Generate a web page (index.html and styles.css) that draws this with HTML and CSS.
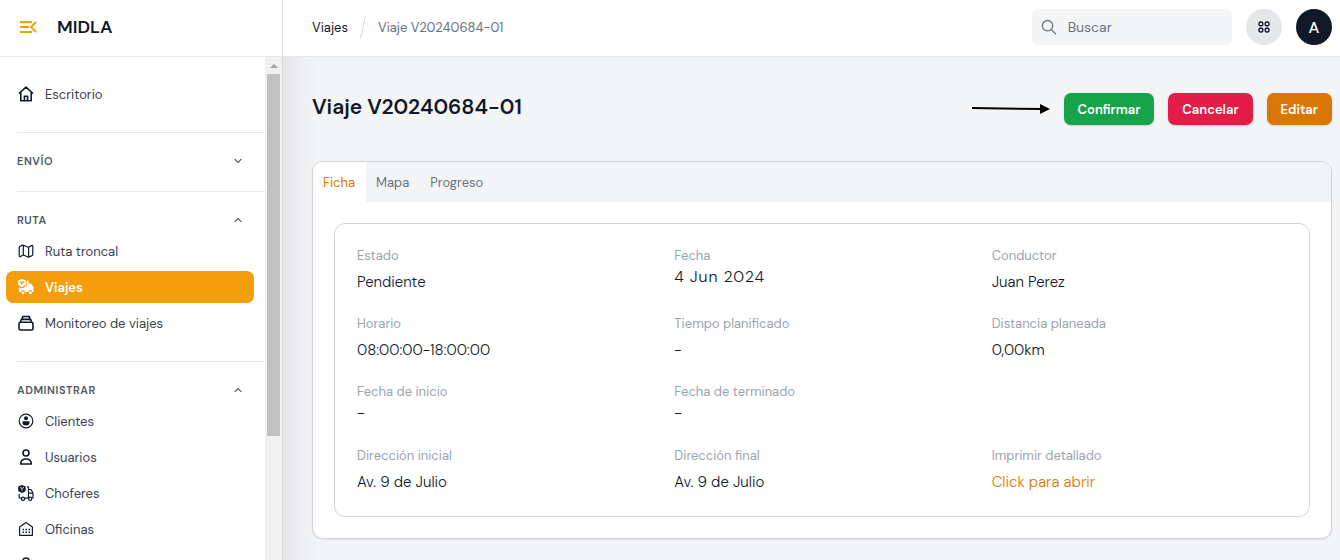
FILE: index.html
```html
<!DOCTYPE html>
<html lang="es">
<head>
    <meta charset="UTF-8">
    <title>Viaje V20240684-01 - MIDLA</title>
    <link rel="stylesheet" href="styles.css">
</head>
<body>
    <header class="topbar">
        <div class="brand">
            <button class="menu-toggle" aria-label="Menú">
                <svg width="18" height="14" viewBox="0 0 18 14" fill="none" stroke="currentColor" stroke-width="2"><path d="M1 2h12M1 7h9M1 12h12M17 2l-5 5 5 5"/></svg>
            </button>
            <span class="brand-name">MIDLA</span>
        </div>
        <nav class="breadcrumbs">
            <a href="#">Viajes</a>
            <svg width="6" height="22" viewBox="0 0 6 22" stroke="#d1d5db"><path d="M5.500 0L.5 22"/></svg>
            <span>Viaje V20240684-01</span>
        </nav>
        <div class="topbar-right">
            <label class="search">
                <svg width="18" height="18" viewBox="0 0 24 24" fill="none" stroke="currentColor" stroke-width="2" stroke-linecap="round"><circle cx="10" cy="10" r="8"/><path d="M16 16l6.500 6.500"/></svg>
                <input type="search" placeholder="Buscar" aria-label="Buscar">
            </label>
            <button class="round apps" aria-label="Accesos">
                <svg width="12" height="12" viewBox="0 0 12 12" fill="none" stroke="currentColor" stroke-width="1.400"><rect x="1" y="1" width="3.800" height="3.800" rx="1.400"/><rect x="7.200" y="1" width="3.800" height="3.800" rx="1.400"/><rect x="1" y="7.200" width="3.800" height="3.800" rx="1.400"/><rect x="7.200" y="7.200" width="3.800" height="3.800" rx="1.400"/></svg>
            </button>
            <button class="round avatar">A</button>
        </div>
    </header>

    <div class="layout">
        <aside class="sidebar">
            <nav class="menu">
                <a class="item item-home" href="#">
                    <svg class="icon" viewBox="0 0 16 16"><path d="M1 7.500L8 1.200l7 6.300M2.800 6.200v8.600h10.400V6.200M6.400 14.500V10.300h3.200v4.200"/></svg>
                    Escritorio
                </a>
                <section class="group">
                    <button class="group-title">ENVÍO <svg class="chevron" viewBox="0 0 8 6"><path d="M.7 1.200L4 4.500l3.300-3.300"/></svg></button>
                </section>
                <section class="group">
                    <button class="group-title">RUTA <svg class="chevron" viewBox="0 0 8 6"><path d="M.7 4.800L4 1.500l3.300 3.300"/></svg></button>
                    <div class="group-items">
                        <a class="item" href="#">
                            <svg class="icon thin" viewBox="0 0 16 16"><path d="M1.200 4.600q0-.8.8-1.200l2.800-1.400 5.600 2.200 3-1.600q1.400-.6 1.400.8v8q0 .8-.8 1.200l-3.400 1.600-5.200-2.200-2.800 1.400q-1.400.5-1.400-.8zM5.300 2v10M10.600 4.200v10"/></svg>
                            Ruta troncal
                        </a>
                        <a class="item active" href="#">
                            <svg class="icon solid" viewBox="0 0 16 16"><path d="M4 0l3.700 1.600v4.500L4 8 .2 6.100V1.600z"/><path d="M8.700 1.500h1.800v3H13l2.500 3.600V13h-1.300a1.900 1.900 0 0 0-3.800 0H6.900A1.900 1.900 0 0 0 3.100 13H1V8.200l3 1.200 4.700-2.300z"/><circle cx="5" cy="13.800" r="1.500"/><circle cx="12.300" cy="13.800" r="1.500"/><path class="cut" d="M2 2.600l2 1 2-1M4 3.600v2.200"/></svg>
                            Viajes
                        </a>
                        <a class="item" href="#">
                            <svg class="icon" viewBox="0 0 16 16"><rect x="1" y="7.200" width="14" height="7.800" rx="1.600"/><path d="M2.500 7l.8-2.600h9.400l.8 2.600M4.200 4.200l.6-2.700h6.400l.6 2.700"/></svg>
                            Monitoreo de viajes
                        </a>
                    </div>
                </section>
                <section class="group">
                    <button class="group-title">ADMINISTRAR <svg class="chevron" viewBox="0 0 8 6"><path d="M.7 4.800L4 1.500l3.300 3.300"/></svg></button>
                    <div class="group-items">
                        <a class="item" href="#">
                            <svg class="icon thin" viewBox="0 0 16 16"><circle cx="8" cy="8" r="6.800"/><g class="fill"><circle cx="8" cy="5.300" r="2"/><path d="M4.500 8.200h7v1.500a3.500 2.700 0 0 1-7 0z"/></g></svg>
                            Clientes
                        </a>
                        <a class="item" href="#">
                            <svg class="icon" viewBox="0 0 16 16"><circle cx="8" cy="4" r="3"/><path d="M2.700 15c0-3.200 2-5 5.300-5s5.300 1.800 5.300 5z"/></svg>
                            Usuarios
                        </a>
                        <a class="item" href="#">
                            <svg class="icon thin" viewBox="0 0 16 16"><path class="fill" d="M4 0l3.700 1.600v4.500L4 8 .2 6.100V1.600z"/><path stroke="#fff" stroke-width=".8" d="M2 2.400l2 1 2-1M4 3.400v2.400"/><path d="M1.200 9v4h2M6.900 13.200h3.600M9 1.800h1.500v11M10.800 4.500h2.200l2 3.500v5h-1M11 8.200h4"/><circle cx="5" cy="13.700" r="1.600"/><circle cx="12.200" cy="13.700" r="1.600"/></svg>
                            Choferes
                        </a>
                        <a class="item" href="#">
                            <svg class="icon thin" viewBox="0 0 16 16"><path d="M1.600 14.300V6L8 1.400 14.400 6v8.300z"/><path d="M4.500 8.500h7.500M4.500 11.200h7.500" stroke-width="1.500" stroke-dasharray="1.500 1.500"/></svg>
                            Oficinas
                        </a>
                        <a class="item" href="#">
                            <svg class="icon" viewBox="0 0 16 16"><circle cx="8" cy="4" r="3"/><path d="M2.700 15c0-3.200 2-5 5.300-5s5.300 1.800 5.300 5z"/></svg>
                        </a>
                    </div>
                </section>
            </nav>
            <div class="scrollbar">
                <div class="scroll-up"></div>
                <div class="scroll-thumb"></div>
            </div>
        </aside>

        <main class="content">
            <div class="page-head">
                <h1>Viaje V20240684-01</h1>
                <div class="actions">
                    <svg class="arrow" width="78" height="12" viewBox="0 0 78 12"><path d="M0 5l70 1" stroke="#000" stroke-width="2"/><path d="M68 1l10 5-10 5z"/></svg>
                    <button class="btn btn-green">Confirmar</button>
                    <button class="btn btn-red">Cancelar</button>
                    <button class="btn btn-amber">Editar</button>
                </div>
            </div>

            <div class="card">
                <div class="tabs" role="tablist">
                    <button class="tab selected" role="tab">Ficha</button>
                    <button class="tab" role="tab">Mapa</button>
                    <button class="tab" role="tab">Progreso</button>
                </div>
                <div class="panel">
                    <dl class="details">
                        <div>
                            <dt>Estado</dt>
                            <dd>Pendiente</dd>
                        </div>
                        <div>
                            <dt>Fecha</dt>
                            <dd class="date">4 Jun 2024</dd>
                        </div>
                        <div>
                            <dt>Conductor</dt>
                            <dd>Juan Perez</dd>
                        </div>
                        <div>
                            <dt>Horario</dt>
                            <dd>08:00:00-18:00:00</dd>
                        </div>
                        <div>
                            <dt>Tiempo planificado</dt>
                            <dd>-</dd>
                        </div>
                        <div>
                            <dt>Distancia planeada</dt>
                            <dd>0,00km</dd>
                        </div>
                        <div>
                            <dt>Fecha de inicio</dt>
                            <dd class="date">-</dd>
                        </div>
                        <div class="span-2">
                            <dt>Fecha de terminado</dt>
                            <dd class="date">-</dd>
                        </div>
                        <div>
                            <dt>Dirección inicial</dt>
                            <dd>Av. 9 de Julio</dd>
                        </div>
                        <div>
                            <dt>Dirección final</dt>
                            <dd>Av. 9 de Julio</dd>
                        </div>
                        <div>
                            <dt>Imprimir detallado</dt>
                            <dd><a href="#">Click para abrir</a></dd>
                        </div>
                    </dl>
                </div>
            </div>
        </main>
    </div>
</body>
</html>
```
FILE: styles.css
```css
* {
    box-sizing: border-box;
}

body {
    margin: 0;
    height: 100vh;
    display: flex;
    flex-direction: column;
    overflow: hidden;
    font-family: "DM Sans", Inter, "Liberation Sans", sans-serif;
    font-size: 13px;
    color: #111827;
    background: #f3f4f6;
}

a {
    color: inherit;
    text-decoration: none;
}

button {
    font: inherit;
    color: inherit;
    border: 0;
    padding: 0;
    background: none;
    cursor: pointer;
}

/* Top bar */
.topbar {
    display: flex;
    align-items: center;
    flex: none;
    height: 57px;
    padding-right: 8px;
    background: #fff;
    border-bottom: 1px solid #e5e7eb;
    position: relative;
    z-index: 2;
}

.brand,
.breadcrumbs,
.topbar-right {
    padding-bottom: 2px;
}

.brand {
    display: flex;
    align-items: center;
    gap: 20px;
    width: 283px;
    height: 100%;
    padding-left: 19px;
    border-right: 1px solid #e5e7eb;
}

.menu-toggle {
    display: flex;
    color: #f59e0b;
}

.brand-name {
    font-size: 18px;
    font-weight: 600;
}

.breadcrumbs {
    display: flex;
    align-items: center;
    gap: 12px;
    padding-left: 29px;
}

.breadcrumbs span {
    color: #6b7280;
}

.topbar-right {
    display: flex;
    gap: 14px;
    margin-left: auto;
}

.search {
    display: flex;
    align-items: center;
    gap: 9px;
    width: 200px;
    height: 36px;
    padding-left: 9px;
    border-radius: 7px;
    background: #f4f5f7;
    color: #6b7280;
}

.search input {
    width: 100%;
    border: 0;
    outline: 0;
    background: none;
    font: inherit;
    font-size: 14px;
}

.search input::placeholder {
    color: #6b7280;
}

.round {
    display: flex;
    align-items: center;
    justify-content: center;
    width: 36px;
    height: 36px;
    border-radius: 50%;
}

.apps {
    background: #e5e7eb;
}

.avatar {
    background: #111827;
    color: #fff;
    font-size: 16px;
    font-weight: 500;
}

/* Sidebar */
.layout {
    display: flex;
    flex: 1;
    min-height: 0;
}

.sidebar {
    display: flex;
    width: 283px;
    flex: none;
    background: #fff;
    border-right: 1px solid #e5e7eb;
    position: relative;
    z-index: 1;
}

/* soft shade over the content edge */
.sidebar::after {
    content: "";
    position: absolute;
    top: 0;
    bottom: 0;
    left: 100%;
    width: 38px;
    background: linear-gradient(to right, rgba(0, 0, 0, 0.07), rgba(0, 0, 0, 0.02) 50%, transparent);
    pointer-events: none;
}

.menu {
    flex: 1;
    overflow: hidden;
    padding-top: 21px;
}

.item {
    display: flex;
    align-items: center;
    gap: 11px;
    height: 32px;
    margin: 0 11px 0 6px;
    padding-left: 12px;
    border-radius: 7px;
    color: #374151;
}

.item-home {
    margin-bottom: 22px;
}

.item.active {
    background: #f59e0b;
    color: #fff;
    font-weight: 600;
}

.icon {
    width: 16px;
    height: 16px;
    fill: none;
    stroke: #111827;
    stroke-width: 1.6;
    stroke-linejoin: round;
}

.icon.thin {
    stroke-width: 1.2;
}

.icon .fill {
    fill: #111827;
    stroke: none;
}

.icon.solid {
    fill: #fff;
    stroke: none;
}

.icon .cut {
    fill: none;
    stroke: #f59e0b;
}

.group {
    margin-left: 17px;
    padding: 18px 0 20px;
    border-top: 1px solid #e5e7eb;
}

.group-title {
    display: flex;
    align-items: center;
    justify-content: space-between;
    width: 100%;
    height: 20px;
    padding-right: 23px;
    font-size: 11px;
    font-weight: 600;
    letter-spacing: 0.05em;
    color: #4b5563;
}

.chevron {
    width: 8px;
    height: 6px;
    fill: none;
    stroke: #4b5563;
    stroke-width: 1.2;
}

.group-items {
    display: grid;
    gap: 4px;
    margin-left: -17px;
    padding: 5px 0 2px;
}

.scrollbar {
    display: flex;
    flex-direction: column;
    align-items: center;
    width: 17px;
    background: #f1f1f1;
}

.scroll-up {
    margin: 7px 0 6px;
    border: 4px solid transparent;
    border-top: 0;
    border-bottom-color: #a3a3a3;
}

.scroll-thumb {
    width: 13px;
    height: 72%;
    background: #c1c1c1;
}

/* Content */
.content {
    flex: 1;
    min-width: 0;
    padding: 36px 8px 20px 29px;
}

.page-head {
    display: flex;
    align-items: flex-start;
    justify-content: space-between;
    margin-bottom: 36px;
}

h1 {
    margin: 0;
    font-size: 21px;
    line-height: 28px;
    font-weight: 600;
}

.actions {
    display: flex;
    align-items: center;
    gap: 14px;
}

.btn {
    height: 32px;
    padding: 0 14px;
    border-radius: 7px;
    color: #fff;
    font-weight: 600;
    box-shadow: 0 1px 2px rgba(0, 0, 0, 0.15);
}

.btn-green {
    background: #16a34a;
}

.btn-red {
    background: #e11d48;
}

.btn-amber {
    background: #d97706;
}

.card {
    background: #fff;
    border: 1px solid #d1d5db;
    border-radius: 11px;
    box-shadow: 0 1px 2px rgba(0, 0, 0, 0.08);
    overflow: hidden;
}

.tabs {
    display: flex;
    height: 40px;
    background: #f3f4f6;
}

.tab {
    padding: 0 11px 0 10px;
    color: #6b7280;
}

.tab.selected {
    background: #fff;
    color: #d97706;
}

.panel {
    padding: 21px;
}

.details {
    display: grid;
    grid-template-columns: repeat(3, 1fr);
    gap: 22px;
    margin: 0;
    padding: 23px 22px;
    border: 1px solid #d1d5db;
    border-radius: 11px;
}

.span-2 {
    grid-column: span 2;
}

dt {
    line-height: 18px;
    color: #9ca3af;
}

dd {
    margin: 0;
    padding-top: 6px;
    font-size: 15px;
    font-weight: 300;
    line-height: 22px;
}

dd.date {
    padding-top: 0;
    font-size: 16px;
    line-height: 24px;
    letter-spacing: 0.05em;
}

dd a {
    color: #d97706;
}
```
